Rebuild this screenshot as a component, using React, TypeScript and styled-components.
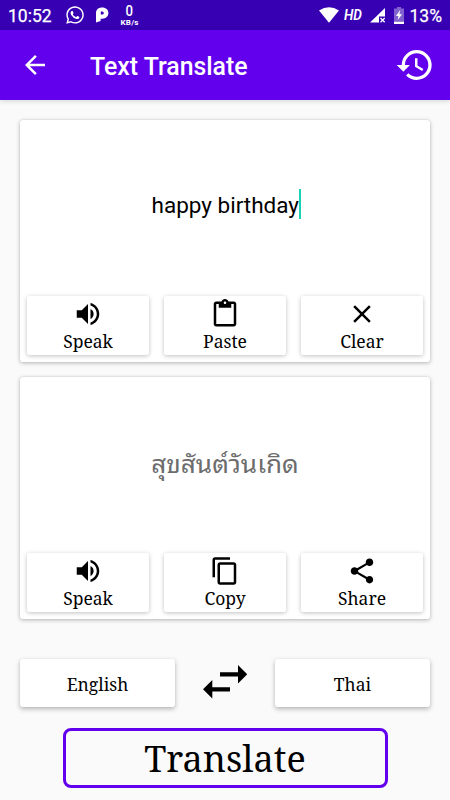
import React from "react";
import styled, { createGlobalStyle } from "styled-components";
import {
  MdArrowBack,
  MdClose,
  MdContentCopy,
  MdContentPaste,
  MdHistory,
  MdShare,
  MdVolumeUp,
} from "react-icons/md";
import { FaWhatsapp } from "react-icons/fa";

const GlobalStyle = createGlobalStyle`
  * { box-sizing: border-box; }
  body { margin: 0; background: #fafafa; }
  svg { display: block; flex: none; }
`;

const serif = `"Noto Serif", "Droid Serif", "DejaVu Serif Condensed", "DejaVu Serif", serif`;

const Screen = styled.div`
  width: 450px;
  height: 800px;
  display: flex;
  flex-direction: column;
  overflow: hidden;
  background: #fafafa;
  color: #000;
  font-family: Roboto, sans-serif;
`;

const StatusBar = styled.div`
  height: 30px;
  flex: none;
  display: flex;
  align-items: center;
  justify-content: space-between;
  padding: 0 8px;
  background: #3700b3;
  color: #fff;
`;

const StatusGroup = styled.div`
  display: flex;
  align-items: center;
  height: 30px;
`;

const StatusText = styled.span<{ $gap?: number }>`
  font-size: 17.5px;
  line-height: 30px;
  margin-top: 1px;
  margin-left: ${(p) => p.$gap ?? 0}px;
  -webkit-text-stroke: 0.25px #fff;
`;

const StatusIcon = styled.span<{ $gap: number }>`
  margin-left: ${(p) => p.$gap}px;
`;

const Speed = styled.div`
  margin-left: 11px;
  width: 20px;
  display: flex;
  flex-direction: column;
  align-items: center;
`;

const SpeedValue = styled.span`
  font-size: 15px;
  line-height: 17px;
  font-weight: 500;
  transform: scaleX(0.88);
`;

const SpeedUnit = styled.span`
  font-size: 8px;
  line-height: 9px;
  margin-top: -2px;
  font-weight: 700;
  letter-spacing: 0.2px;
`;

const Quality = styled.span`
  margin-left: 5px;
  font-size: 14.5px;
  font-weight: 600;
  font-style: italic;
  width: 19px;
  transform: scaleX(0.94);
  transform-origin: left;
`;

const AppBar = styled.header`
  height: 70px;
  flex: none;
  display: flex;
  align-items: center;
  padding: 0 15px 0 20px;
  background: #6200ee;
  color: #fff;
  box-shadow: 0 1px 5px rgba(0, 0, 0, 0.16);
`;

const Title = styled.h1`
  flex: 1;
  margin: 3px 0 0 40px;
  font-size: 24.85px;
  line-height: 30px;
  font-weight: 500;
`;

const Content = styled.main`
  display: flex;
  flex-direction: column;
  padding: 20px 20px 0;
`;

const Card = styled.section`
  height: 242px;
  margin-bottom: 15px;
  display: flex;
  flex-direction: column;
  padding: 0 7px 7px;
  background: #fff;
  border-radius: 2.5px;
  box-shadow: 0 1px 4px rgba(0, 0, 0, 0.28), 0 0 1px rgba(0, 0, 0, 0.2);
`;

const InputText = styled.div`
  flex: 1;
  display: flex;
  align-items: center;
  justify-content: center;
  padding: 0 0 6px 3px;
  font-size: 22.5px;
`;

const ResultText = styled.div`
  flex: 1;
  display: flex;
  align-items: center;
  justify-content: center;
  padding-bottom: 7px;
  font-family: "Noto Sans Thai Looped", Loma, "Noto Sans Thai", "Noto Sans", sans-serif;
  font-size: 24px;
  color: #6c6c6c;
  transform: scaleX(1.09);
`;

const Caret = styled.i`
  width: 2.5px;
  height: 30px;
  margin-top: -2px;
  background: #1cd3b8;
`;

const Actions = styled.div`
  display: grid;
  grid-template-columns: repeat(3, 122px);
  justify-content: space-between;
`;

const Raised = styled.button`
  border: 0;
  padding: 0;
  display: flex;
  flex-direction: column;
  align-items: center;
  background: #fff;
  color: #000;
  border-radius: 2.5px;
  font-family: ${serif};
  font-size: 17.5px;
`;

const Action = styled(Raised)`
  height: 59px;
  padding-top: 3px;
  box-shadow: 0 1px 4px rgba(0, 0, 0, 0.25);
`;

const Label = styled.span`
  line-height: 25px;
`;

const Languages = styled.div`
  display: flex;
  align-items: center;
  justify-content: space-between;
  margin-top: 25px;
  height: 48px;
`;

const Language = styled(Raised)`
  width: 155px;
  height: 48px;
  justify-content: center;
  padding-top: 2px;
  box-shadow: 0 2px 5px rgba(0, 0, 0, 0.28), 0 0 1px rgba(0, 0, 0, 0.15);
`;

const Translate = styled.button`
  align-self: center;
  width: 325px;
  height: 60px;
  margin: 20.5px 0 0;
  padding: 2px 0 0;
  display: flex;
  align-items: center;
  justify-content: center;
  border: 3.5px solid #6200ee;
  border-radius: 8px;
  background: transparent;
  color: #000;
  font-family: ${serif};
  font-size: 36px;
`;

const ParkIcon = () => (
  <svg width="13" height="16" viewBox="0 0 13 16" fill="#fff">
    <path
      fillRule="evenodd"
      d="M0 15.5V6C0 2.5 2.4.4 6.2.4 10 .4 12.4 2.6 12.4 6s-2.5 5.7-6 5.7H4.6v2.2L0 15.5ZM6.3 4.6H4.8v3h1.5a1.5 1.5 0 0 0 0-3Z"
    />
  </svg>
);

const WifiIcon = () => (
  <svg width="20" height="16" viewBox="0 0 20 16">
    <path d="M0 3.5Q10-3 20 3.5L10 15.8Z" fill="#fff" />
  </svg>
);

const SignalIcon = () => (
  <svg width="16" height="15" viewBox="0 0 16 15">
    <path d="M0 14.5 15 0V8.6H9V14.5Z" fill="#fff" />
    <path d="m10.5 10 4.2 4.2m0-4.2-4.2 4.2" stroke="#fff" strokeWidth="1.3" />
  </svg>
);

const BatteryIcon = () => (
  <svg width="10" height="17" viewBox="0 0 10 17">
    <path d="M3 0h4v1.6h3V14H0V1.6h3Z" fill="#8061cf" />
    <path d="M0 14.5h10V17H0ZM6.2 3 2 9h2.5L3.7 13 8 7.3H5.4Z" fill="#fff" />
  </svg>
);

const SwapIcon = () => (
  <svg width="44" height="36" viewBox="0 0 44 36">
    <path d="M17 7.2h18V0l9.2 9.3L35 18.6v-7.2H17ZM27 22.2H9.3V15L0 24.3l9.3 9.3v-7.2H27Z" />
  </svg>
);

const sourceActions = [
  { label: "Speak", Icon: MdVolumeUp },
  { label: "Paste", Icon: MdContentPaste },
  { label: "Clear", Icon: MdClose },
];

const resultActions = [
  { label: "Speak", Icon: MdVolumeUp },
  { label: "Copy", Icon: MdContentCopy },
  { label: "Share", Icon: MdShare },
];

const ActionRow = ({ items }: { items: typeof sourceActions }) => (
  <Actions>
    {items.map(({ label, Icon }) => (
      <Action key={label}>
        <Icon size={30} />
        <Label>{label}</Label>
      </Action>
    ))}
  </Actions>
);

export default function App() {
  return (
    <Screen>
      <GlobalStyle />
      <StatusBar>
        <StatusGroup>
          <StatusText>10:52</StatusText>
          <StatusIcon $gap={13}>
            <FaWhatsapp size={20} />
          </StatusIcon>
          <StatusIcon $gap={11}>
            <ParkIcon />
          </StatusIcon>
          <Speed>
            <SpeedValue>0</SpeedValue>
            <SpeedUnit>KB/s</SpeedUnit>
          </Speed>
        </StatusGroup>
        <StatusGroup>
          <WifiIcon />
          <Quality>HD</Quality>
          <StatusIcon $gap={7}>
            <SignalIcon />
          </StatusIcon>
          <StatusIcon $gap={8}>
            <BatteryIcon />
          </StatusIcon>
          <StatusText $gap={5.5}>13%</StatusText>
        </StatusGroup>
      </StatusBar>
      <AppBar>
        <MdArrowBack size={30} />
        <Title>Text Translate</Title>
        <MdHistory size={40} />
      </AppBar>
      <Content>
        <Card>
          <InputText>
            happy birthday
            <Caret />
          </InputText>
          <ActionRow items={sourceActions} />
        </Card>
        <Card>
          <ResultText>สุขสันต์วันเกิด</ResultText>
          <ActionRow items={resultActions} />
        </Card>
        <Languages>
          <Language>
            <Label>English</Label>
          </Language>
          <SwapIcon />
          <Language>
            <Label>Thai</Label>
          </Language>
        </Languages>
        <Translate>
          <Label>Translate</Label>
        </Translate>
      </Content>
    </Screen>
  );
}
